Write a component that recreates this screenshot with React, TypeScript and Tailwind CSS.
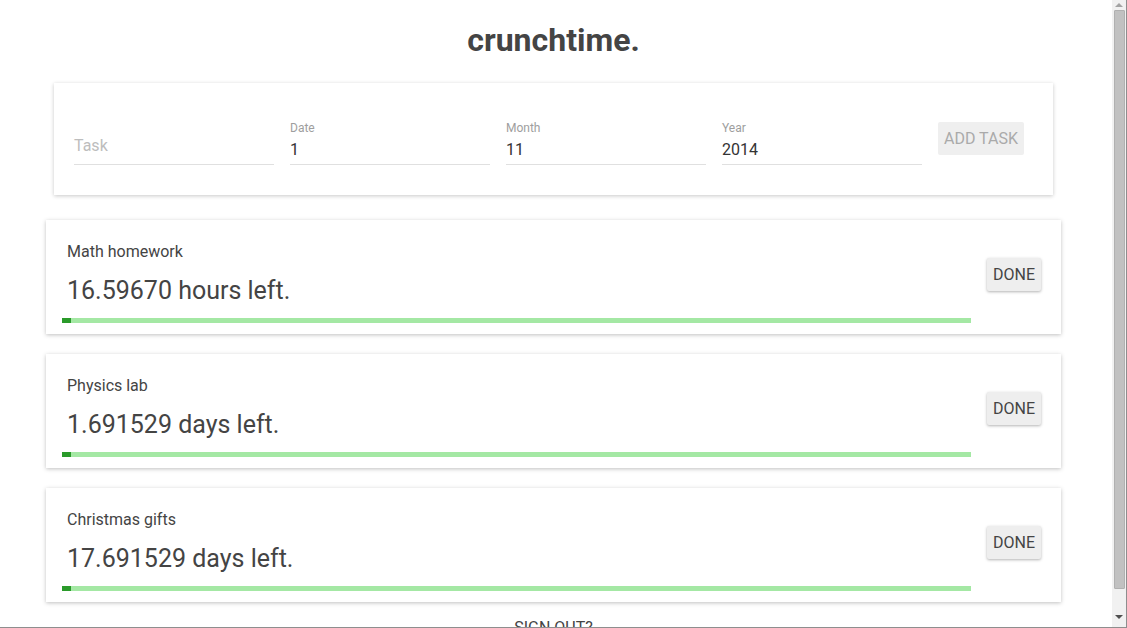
import React from "react";

const tasks = [
  { name: "Math homework", left: "16.59670 hours left." },
  { name: "Physics lab", left: "1.691529 days left." },
  { name: "Christmas gifts", left: "17.691529 days left." },
];

function Field({ label, value }: { label?: string; value?: string }) {
  return (
    <div className="flex w-[200px] flex-col border-b border-[#e0e0e0]">
      {label ? (
        <>
          <div className="h-[16px] text-[12px] leading-[16px] text-[#9e9e9e]">{label}</div>
          <div className="mt-[2px] h-[26px] text-[16px] leading-[24px] text-[#333]">{value}</div>
        </>
      ) : (
        <div className="h-[44px] pt-[14px] text-[16px] leading-[24px] text-[#bdbdbd]">Task</div>
      )}
    </div>
  );
}

function Scrollbar() {
  return (
    <div className="flex h-full w-[14px] shrink-0 flex-col items-center bg-[#f1f1f1]">
      <svg width="8" height="10" viewBox="0 0 8 10" className="shrink-0">
        <path d="M0 7 L4 3 L8 7 Z" fill="#a3a3a3" />
      </svg>
      <div className="h-[579px] w-[11px] shrink-0 rounded-[1px] border border-[#b0b0b0] bg-[#c1c1c1]" />
      <div className="flex-1" />
      <svg width="8" height="10" viewBox="0 0 8 10" className="mb-[5px] shrink-0">
        <path d="M0 3 L4 7 L8 3 Z" fill="#505050" />
      </svg>
    </div>
  );
}

export default function App() {
  return (
    <div
      className="flex h-[628px] overflow-hidden border-r border-b border-[#8e8e8e] bg-white text-[#444]"
      style={{ fontFamily: "Roboto, 'Noto Sans', sans-serif" }}
    >
      <div className="min-w-0 flex-1 overflow-hidden">
        <div className="ml-[46px] w-[1015px]">
          <h1 className="pt-[20px] text-center text-[32px] font-bold leading-[40px] text-[#444]">crunchtime.</h1>
          <div className="mx-[8px] mt-[23px] flex items-start gap-4 bg-white px-[20px] pt-[37px] pb-[30px] shadow-[0_1px_4px_rgba(0,0,0,0.22)]">
            <Field />
            <Field label="Date" value="1" />
            <Field label="Month" value="11" />
            <Field label="Year" value="2014" />
            <button className="mt-[2px] h-[33px] rounded-[2px] bg-[#efefef] px-[6px] text-[16px] text-[#aaa]">ADD TASK</button>
          </div>
          <div className="mt-[25px] flex flex-col gap-[20px]">
            {tasks.map((t) => (
              <div
                key={t.name}
                className="flex items-center gap-[16px] bg-white pl-[16px] pr-[20px] pt-[20px] pb-[11px] shadow-[0_1px_4px_rgba(0,0,0,0.25)]"
              >
                <div className="flex-1">
                  <div className="pl-[5px] text-[16px] leading-[24px] text-[#444]">{t.name}</div>
                  <div className="mt-[11px] pl-[5px] text-[25px] leading-[32px] text-[#444]">{t.left}</div>
                  <div className="mt-[11px] flex h-[5px] bg-[#a4e8a4]">
                    <div className="h-full w-[9px] bg-[#2a9a2a]" />
                  </div>
                </div>
                <button className="mb-[14px] h-[33px] rounded-[2px] bg-[#eeeeee] px-[6px] text-[16px] text-[#444] shadow-[0_1px_3px_rgba(0,0,0,0.3)]">
                  DONE
                </button>
              </div>
            ))}
          </div>
          <div className="mt-[14px] pb-[40px] text-center text-[16px] leading-[24px] text-[#444]">SIGN OUT?</div>
        </div>
      </div>
      <Scrollbar />
    </div>
  );
}
